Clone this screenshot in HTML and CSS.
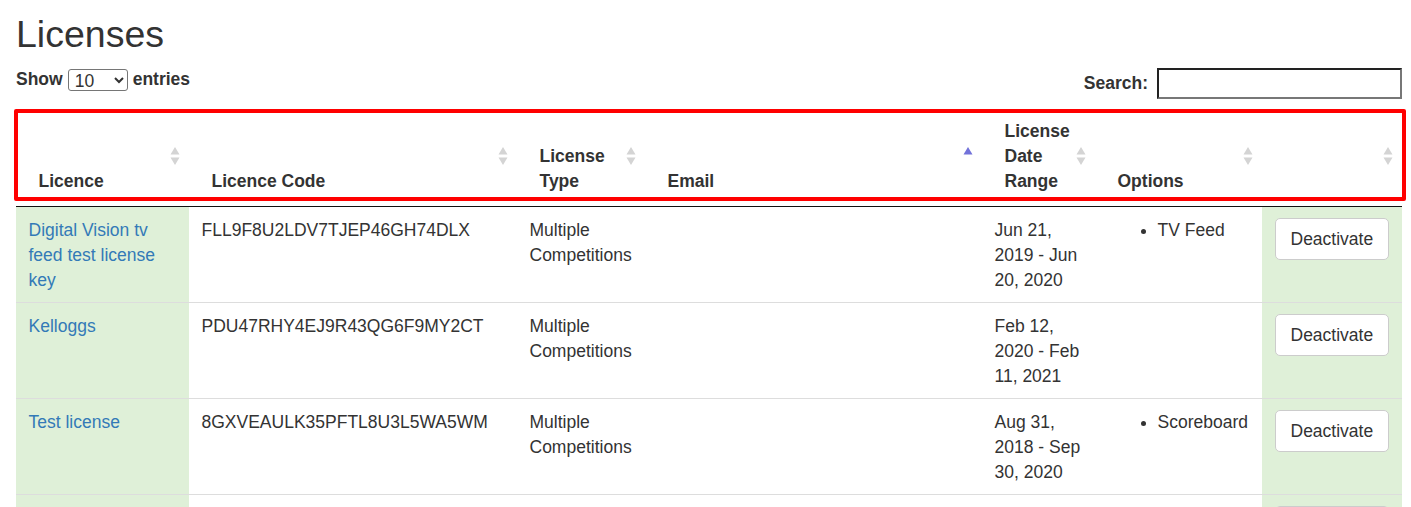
FILE: index.html
```html
<!doctype html>
<html>
<head>
<meta charset="utf-8">
<title>Licenses</title>
<link rel="stylesheet" href="styles.css">
</head>

<body>
<div class="page">
	<h2 class="page-title">Licenses</h2>

	<div class="table-controls">
		<div class="length">
			<label>Show</label>
			<select class="length-select">
				<option>10</option>
				<option>25</option>
				<option>50</option>
				<option>100</option>
			</select>
			<label>entries</label>
		</div>
		<div class="filter">
			<label>Search:</label>
			<input class="filter-input" type="text">
		</div>
	</div>

	<div class="table-holder">
		<table class="licenses">
			<colgroup>
				<col style="width:173px">
				<col style="width:328px">
				<col style="width:128px">
				<col style="width:337px">
				<col style="width:113px">
				<col style="width:167px">
				<col style="width:140px">
			</colgroup>
			<thead>
				<tr>
					<th>Licence<svg class="sort-icon" viewBox="0 0 10 20"><path d="M5 1L9.5 8.5H0.5Z"/><path d="M0.5 11.5H9.5L5 19Z"/></svg></th>
					<th>Licence Code<svg class="sort-icon" viewBox="0 0 10 20"><path d="M5 1L9.5 8.5H0.5Z"/><path d="M0.5 11.5H9.5L5 19Z"/></svg></th>
					<th>License Type<svg class="sort-icon" viewBox="0 0 10 20"><path d="M5 1L9.5 8.5H0.5Z"/><path d="M0.5 11.5H9.5L5 19Z"/></svg></th>
					<th>Email<svg class="sort-icon sort-asc" viewBox="0 0 10 20"><path d="M5 1L9.5 8.5H0.5Z"/></svg></th>
					<th>License Date Range<svg class="sort-icon" viewBox="0 0 10 20"><path d="M5 1L9.5 8.5H0.5Z"/><path d="M0.5 11.5H9.5L5 19Z"/></svg></th>
					<th>Options<svg class="sort-icon" viewBox="0 0 10 20"><path d="M5 1L9.5 8.5H0.5Z"/><path d="M0.5 11.5H9.5L5 19Z"/></svg></th>
					<th><svg class="sort-icon" viewBox="0 0 10 20"><path d="M5 1L9.5 8.5H0.5Z"/><path d="M0.5 11.5H9.5L5 19Z"/></svg></th>
				</tr>
			</thead>
			<tbody>
				<tr>
					<td class="success"><a href="#">Digital Vision tv feed test license key</a></td>
					<td>FLL9F8U2LDV7TJEP46GH74DLX</td>
					<td>Multiple Competitions</td>
					<td></td>
					<td>Jun 21, 2019 - Jun 20, 2020</td>
					<td><ul class="options"><li>TV Feed</li></ul></td>
					<td class="success"><button class="btn">Deactivate</button></td>
				</tr>
				<tr>
					<td class="success"><a href="#">Kelloggs</a></td>
					<td>PDU47RHY4EJ9R43QG6F9MY2CT</td>
					<td>Multiple Competitions</td>
					<td></td>
					<td>Feb 12, 2020 - Feb 11, 2021</td>
					<td></td>
					<td class="success"><button class="btn">Deactivate</button></td>
				</tr>
				<tr>
					<td class="success"><a href="#">Test license</a></td>
					<td>8GXVEAULK35PFTL8U3L5WA5WM</td>
					<td>Multiple Competitions</td>
					<td></td>
					<td>Aug 31, 2018 - Sep 30, 2020</td>
					<td><ul class="options"><li>Scoreboard</li></ul></td>
					<td class="success"><button class="btn">Deactivate</button></td>
				</tr>
				<tr class="row-last">
					<td class="success"></td>
					<td></td>
					<td></td>
					<td></td>
					<td></td>
					<td></td>
					<td class="success"><button class="btn">Deactivate</button></td>
				</tr>
			</tbody>
		</table>
		<!-- red marker round the header -->
		<div class="highlight"></div>
	</div>
</div>
</body>
</html>
```

FILE: styles.css
```css
	html, body
	{
		overflow: hidden;
	}
	body
	{
		margin: 0;
		font-family: "Liberation Sans", Arial, sans-serif;
		font-size: 17.5px;
		line-height: 25px;
		color: #333;
		background: #fff;
	}
	.page
	{
		width: 1386px;
		padding-left: 16px;
	}
	.page-title
	{
		margin: 14px 0 0;
		font-size: 37.5px;
		font-weight: 500;
		line-height: 41.25px;
	}

	/*show / search*/
	.table-controls
	{
		display: flex;
		justify-content: space-between;
		align-items: flex-start;
		margin-top: 12px;
	}
	.length
	{
		display: flex;
		align-items: center;
		gap: 5px;
		height: 25px;
		font-weight: bold;
	}
	.length-select
	{
		width: 60px;
		height: 22px;
		padding: 0 2px;
		font-family: inherit;
		font-size: 17.5px;
		color: #333;
		background: #fff;
		border: 1px solid #767676;
		border-radius: 3px;
	}
	.filter
	{
		display: flex;
		align-items: center;
		gap: 9px;
		margin-top: 1px;
		font-weight: bold;
	}
	.filter-input
	{
		box-sizing: border-box;
		width: 245px;
		height: 31px;
		margin: 0;
		padding: 1px 2px;
		font-size: 17.5px;
		border-width: 2px;
		border-style: solid;
		border-color: #222 #777 #777 #222;
		background: #fff;
	}

	/*table*/
	.table-holder
	{
		position: relative;
		margin-top: 7px;
	}
	.licenses
	{
		width: 1386px;
		table-layout: fixed;
		border-collapse: collapse;
	}
	.licenses th
	{
		position: relative;
		padding: 12.5px 22.5px;
		text-align: left;
		vertical-align: bottom;
		font-weight: bold;
		border-bottom: 1px solid #111;
	}
	.licenses td
	{
		padding: 11px 12.5px 9px;
		vertical-align: top;
		border-top: 1px solid #ddd;
	}
	.licenses tbody tr:first-child td
	{
		border-top: none;
	}
	.licenses .row-last td
	{
		height: 75px;
	}
	.licenses td.success
	{
		background-color: #dff0d8;
	}
	.licenses a
	{
		color: #337ab7;
		text-decoration: none;
	}
	.sort-icon
	{
		position: absolute;
		right: 9px;
		top: 50%;
		width: 10px;
		height: 20px;
		margin-top: -10px;
		fill: #d4d4d4;
	}
	.sort-icon.sort-asc
	{
		fill: #7272da;
	}
	.options
	{
		margin: 0;
		padding-left: 50px;
	}
	.btn
	{
		display: inline-block;
		padding: 7.5px 15px;
		font-family: inherit;
		font-size: 17.5px;
		line-height: 25px;
		color: #333;
		background-color: #fff;
		border: 1px solid #ccc;
		border-radius: 5px;
		cursor: pointer;
	}

	/*red marker*/
	.highlight
	{
		position: absolute;
		left: -2.5px;
		top: 3px;
		width: 1392px;
		height: 92px;
		box-sizing: border-box;
		border: 4px solid #f00;
		border-radius: 2px;
		pointer-events: none;
	}
```
